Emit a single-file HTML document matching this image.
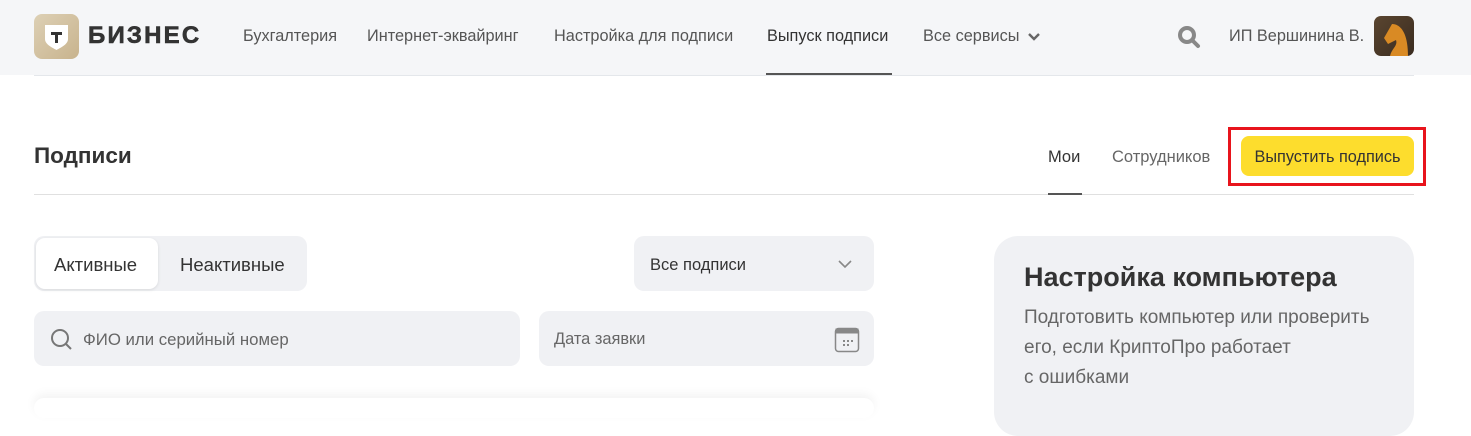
<!DOCTYPE html>
<html><head><meta charset="utf-8"><style>
*{margin:0;padding:0;box-sizing:border-box}
body{width:1471px;height:409px;overflow:hidden;background:#fff;font-family:"Liberation Sans",sans-serif;color:#333;position:relative}
.a{position:absolute;white-space:nowrap}
.hdr{position:absolute;left:0;top:0;width:1471px;height:75px;background:#f5f6f8}
.nav{font-size:16.3px;color:#555;top:27px}
</style></head><body>
<div class="hdr"></div>
<div class="a" style="left:34px;top:75px;width:1380px;height:1px;background:#e4e7eb"></div>
<div class="a" style="left:34px;top:14px;width:45px;height:45px;border-radius:8px;background:linear-gradient(135deg,#ddd0b5,#c8b38d)"></div>
<svg class="a" style="left:44px;top:24px" width="25" height="27" viewBox="0 0 25 27"><path d="M1 1h23v14c0 5-6 8-11.5 11C7 23 1 20 1 15z" fill="#fff"/><path d="M7 8h11v3h-4v8h-3v-8H7z" fill="#333"/></svg>
<div class="a" style="left:88px;top:22px;font-size:24px;font-weight:900;color:#333;letter-spacing:2.2px;-webkit-text-stroke:0.6px #333">БИЗНЕС</div>
<div class="a nav" style="left:243px">Бухгалтерия</div>
<div class="a nav" style="left:367px">Интернет-эквайринг</div>
<div class="a nav" style="left:554px">Настройка для подписи</div>
<div class="a nav" style="left:767px;color:#333">Выпуск подписи</div>
<div class="a" style="left:766px;top:73px;width:126px;height:2px;background:#555"></div>
<div class="a nav" style="left:923px">Все сервисы</div>
<svg class="a" style="left:1027px;top:32px" width="14" height="10"><path d="M2 2l5 5 5-5" stroke="#666" stroke-width="2.4" fill="none"/></svg>
<svg class="a" style="left:1177px;top:25px" width="26" height="26"><circle cx="10" cy="10" r="7" stroke="#888" stroke-width="4" fill="none"/><path d="M15 15l6 6" stroke="#888" stroke-width="4" stroke-linecap="round"/></svg>
<div class="a nav" style="left:1229px">ИП Вершинина В.</div>
<div class="a" style="left:1374px;top:16px;width:40px;height:40px;border-radius:7px;background:linear-gradient(135deg,#5a4530,#3a2c20)"></div>
<svg class="a" style="left:1378px;top:20px" width="36" height="36"><path d="M14 4c8 0 16 8 16 32H12c2-8 8-10 6-16l-8 4-4-6z" fill="#d98a24"/></svg>
<div class="a" style="left:34px;top:143px;font-size:22.5px;font-weight:bold;color:#333">Подписи</div>
<div class="a" style="left:34px;top:194px;width:1380px;height:1px;background:#e0e0e0"></div>
<div class="a" style="left:1048px;top:148px;font-size:16.5px;color:#333">Мои</div>
<div class="a" style="left:1048px;top:193px;width:34px;height:2px;background:#555"></div>
<div class="a" style="left:1112px;top:148px;font-size:16.5px;color:#666">Сотрудников</div>
<div class="a" style="left:1228px;top:127px;width:198px;height:59px;border:3px solid #e8141c"></div>
<div class="a" style="left:1241px;top:136px;width:173px;height:40px;border-radius:8px;background:#fddd2d;font-size:16.3px;color:#333;text-align:center;line-height:42px">Выпустить подпись</div>
<div class="a" style="left:34px;top:236px;width:273px;height:55px;border-radius:10px;background:#f0f1f4"></div>
<div class="a" style="left:36px;top:238px;width:122px;height:51px;border-radius:9px;background:#fff;box-shadow:0 1px 3px rgba(0,0,0,.1)"></div>
<div class="a" style="left:54px;top:254px;font-size:18.5px;color:#333">Активные</div>
<div class="a" style="left:180px;top:254px;font-size:18.5px;color:#333">Неактивные</div>
<div class="a" style="left:634px;top:236px;width:240px;height:55px;border-radius:10px;background:#f0f1f4"></div>
<div class="a" style="left:650px;top:256px;font-size:16.5px;color:#333">Все подписи</div>
<svg class="a" style="left:837px;top:259px" width="16" height="10"><path d="M2 2l6 6 6-6" stroke="#888" stroke-width="1.6" fill="none"/></svg>
<div class="a" style="left:34px;top:311px;width:486px;height:55px;border-radius:10px;background:#f0f1f4"></div>
<svg class="a" style="left:50px;top:328px" width="24" height="24"><circle cx="10" cy="10" r="8" stroke="#777" stroke-width="2" fill="none"/><path d="M16 16l5 5" stroke="#777" stroke-width="2"/></svg>
<div class="a" style="left:83px;top:330px;font-size:16.8px;color:#666">ФИО или серийный номер</div>
<div class="a" style="left:539px;top:311px;width:335px;height:55px;border-radius:10px;background:#f0f1f4"></div>
<div class="a" style="left:554px;top:330px;font-size:16.4px;color:#666">Дата заявки</div>
<svg class="a" style="left:834px;top:327px" width="26" height="26"><rect x="1.5" y="1.5" width="23" height="23" rx="3" stroke="#888" stroke-width="1.5" fill="none"/><rect x="1.5" y="1.5" width="23" height="5" fill="#888"/><g fill="#888"><rect x="9" y="13" width="2" height="2"/><rect x="13" y="13" width="2" height="2"/><rect x="17" y="13" width="2" height="2"/><rect x="9" y="17" width="2" height="2"/><rect x="13" y="17" width="2" height="2"/></g></svg>
<div class="a" style="left:34px;top:398px;width:840px;height:20px;border-radius:12px;background:#fff;box-shadow:0 -4px 10px rgba(0,0,0,.05)"></div>
<div class="a" style="left:994px;top:236px;width:420px;height:200px;border-radius:24px;background:#f0f1f4"></div>
<div class="a" style="left:1024px;top:262px;font-size:27px;font-weight:bold;color:#333">Настройка компьютера</div>
<div class="a" style="left:1024px;top:303px;font-size:19px;color:#666;line-height:30px">Подготовить компьютер или проверить<br>его, если КриптоПро работает<br>с ошибками</div>
</body></html>
